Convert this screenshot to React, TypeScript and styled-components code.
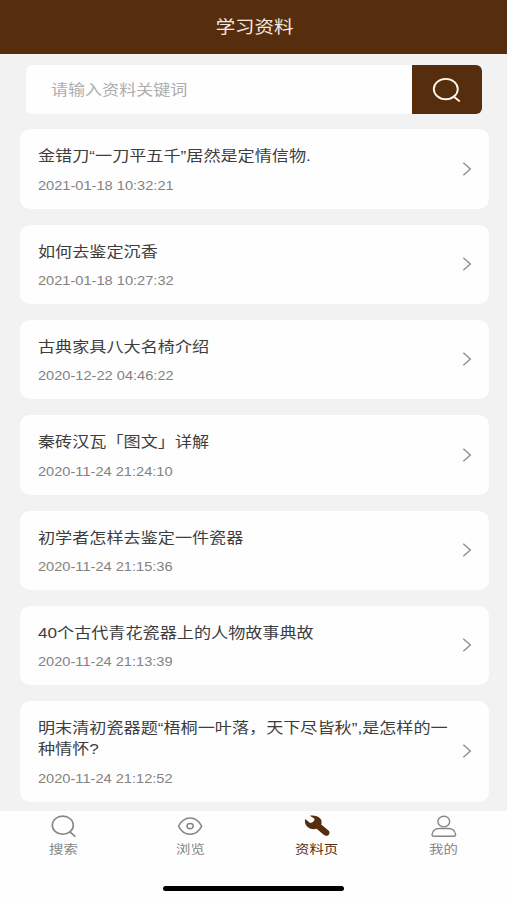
import React from "react";
import styled, { createGlobalStyle } from "styled-components";

const brown = "#572e0d";

const GlobalStyle = createGlobalStyle`
  * { box-sizing: border-box; }
  body {
    margin: 0;
    background: #f2f2f2;
    font-family: "Liberation Sans", "Noto Sans CJK SC", sans-serif;
  }
`;

const Page = styled.div`
  display: flex;
  flex-direction: column;
  width: 507px;
  height: 900px;
  overflow: hidden;
  background: #f2f2f2;
`;

const Wide = styled.span<{ $origin?: string }>`
  display: inline-block;
  white-space: nowrap;
  transform: scaleX(1.16);
  transform-origin: ${(p) => p.$origin ?? "left"} center;
`;

const Header = styled.header`
  flex: none;
  height: 54px;
  display: flex;
  justify-content: center;
  padding-left: 2px;
  background: ${brown};
  color: #f3e9e2;
  font-size: 16.8px;
  line-height: 55px;
`;

const SearchBar = styled.div`
  flex: none;
  display: flex;
  height: 49px;
  margin: 11px 25px 0 26px;
  border-radius: 6px;
  overflow: hidden;
  background: #fefefe;
`;

const SearchField = styled.div`
  flex: 1;
  padding-left: 25px;
  color: #adadad;
  font-size: 14.7px;
  line-height: 51px;
`;

const SearchButton = styled.button`
  display: flex;
  align-items: center;
  justify-content: center;
  width: 70px;
  padding: 0;
  border: 0;
  background: ${brown};
  color: #fff8f0;
`;

const List = styled.main`
  flex: 1;
  min-height: 0;
  display: flex;
  flex-direction: column;
  gap: 15.9px;
  padding: 15.4px 18.3px 0 19.7px;
`;

const Card = styled.article`
  flex: none;
  display: flex;
  align-items: center;
  justify-content: space-between;
  padding: 17.1px 17px 14px 18px;
  border-radius: 10px;
  background: #fefefe;
  color: #929292;

  > svg {
    margin-top: -3.6px;
  }
`;

const CardTitle = styled.h2`
  margin: 0 0 10px;
  color: #3d3d3d;
  font-size: 14.75px;
  font-weight: 400;
  line-height: 21.3px;
`;

const CardDate = styled.time`
  display: block;
  color: #828282;
  font-size: 12.6px;
  line-height: 17px;
`;

const TabBar = styled.nav`
  flex: none;
  display: grid;
  grid-template-columns: repeat(4, 1fr);
  height: 52px;
  background: #fefefe;
`;

const Tab = styled.div<{ $active?: boolean }>`
  display: flex;
  flex-direction: column;
  align-items: center;
  padding-top: 3px;
  color: ${(p) => (p.$active ? brown : "#858585")};
  font-size: 12.4px;
  line-height: 20px;

  svg {
    display: block;
    margin-bottom: 2px;
  }
`;

const HomeArea = styled.footer`
  flex: none;
  display: flex;
  justify-content: center;
  height: 37px;
  padding-top: 23px;
  background: #fefefe;
`;

const HomeIndicator = styled.div`
  width: 181px;
  height: 5px;
  border-radius: 3px;
  background: #000;
`;

const items = [
  { lines: ["金错刀“一刀平五千”居然是定情信物."], date: "2021-01-18 10:32:21" },
  { lines: ["如何去鉴定沉香"], date: "2021-01-18 10:27:32" },
  { lines: ["古典家具八大名椅介绍"], date: "2020-12-22 04:46:22" },
  { lines: ["秦砖汉瓦「图文」详解"], date: "2020-11-24 21:24:10" },
  { lines: ["初学者怎样去鉴定一件瓷器"], date: "2020-11-24 21:15:36" },
  { lines: ["40个古代青花瓷器上的人物故事典故"], date: "2020-11-24 21:13:39" },
  {
    lines: ["明末清初瓷器题“梧桐一叶落，天下尽皆秋”,是怎样的一", "种情怀?"],
    date: "2020-11-24 21:12:52",
  },
];

const Chevron = () => (
  <svg width="10" height="16" viewBox="0 0 10 16" fill="none" stroke="currentColor" strokeWidth="1.5">
    <path d="M1.3 1.8 8.3 8l-7 6.2" />
  </svg>
);

const SearchButtonIcon = () => (
  <svg width="30" height="26" viewBox="0 0 30 26" fill="none" stroke="currentColor" strokeWidth="1.9" strokeLinecap="round">
    <ellipse cx="13.8" cy="12.1" rx="12" ry="10.2" />
    <path d="m21.7 19.5 5.5 4.4" />
  </svg>
);

const SearchIcon = () => (
  <svg width="28" height="24" viewBox="0 0 28 24" fill="none" stroke="currentColor" strokeWidth="1.6" strokeLinecap="round">
    <ellipse cx="13.8" cy="11.2" rx="10.5" ry="9.1" />
    <path d="m20.9 17.8 4.9 4.3" />
  </svg>
);

const EyeIcon = () => (
  <svg width="28" height="24" viewBox="0 0 28 24" fill="none" stroke="currentColor" strokeWidth="1.5">
    <path
      d="M2.5 12.1C5.2 6.8 9.3 3.9 14.1 3.9s8.900 2.900 11.600 8.200c-2.700 5.300-6.800 8.200-11.600 8.200S5.200 17.400 2.500 12.100Z"
      strokeLinejoin="round"
    />
    <ellipse cx="14.1" cy="12.1" rx="3.1" ry="2.7" />
  </svg>
);

const WrenchIcon = () => (
  <svg width="28" height="24" viewBox="0 0 28 24" fill="currentColor">
    <path d="M6.800 1.700C10.500.9 15 1.800 17.300 4.400c1.500 1.800 1.700 4.200.9 6.200l7.300 6c1.400 1.200 1.400 3.100.1 4.300-1.400 1.200-3.500 1.100-4.900-.1l-7.100-6.100c-2.800.9-6.400.5-8.700-1.400C2.200 11 1.300 7.900 2.200 4.900l4 3.300c.9.700 2.300.7 3.200 0l1.500-1.300c.8-.7.8-1.900 0-2.600Z" />
  </svg>
);

const UserIcon = () => (
  <svg width="28" height="24" viewBox="0 0 28 24" fill="none" stroke="currentColor" strokeWidth="1.4">
    <ellipse cx="13.8" cy="7.6" rx="5.9" ry="5.3" />
    <path d="M9.300 14.500h9c4.100 0 6.700 2.300 7.300 6 .1 1-.6 1.700-1.700 1.700H3.700c-1.100 0-1.800-.7-1.700-1.700.6-3.700 3.200-6 7.300-6Z" />
  </svg>
);

const tabs = [
  { label: "搜索", Icon: SearchIcon },
  { label: "浏览", Icon: EyeIcon },
  { label: "资料页", Icon: WrenchIcon, active: true },
  { label: "我的", Icon: UserIcon },
];

export default function App() {
  return (
    <Page>
      <GlobalStyle />
      <Header>
        <Wide $origin="center">学习资料</Wide>
      </Header>
      <SearchBar>
        <SearchField>
          <Wide>请输入资料关键词</Wide>
        </SearchField>
        <SearchButton aria-label="搜索">
          <SearchButtonIcon />
        </SearchButton>
      </SearchBar>
      <List>
        {items.map((item) => (
          <Card key={item.date}>
            <div>
              <CardTitle>
                <Wide>
                  {item.lines.map((line, i) => (
                    <React.Fragment key={line}>
                      {i > 0 && <br />}
                      {line}
                    </React.Fragment>
                  ))}
                </Wide>
              </CardTitle>
              <CardDate>
                <Wide>{item.date}</Wide>
              </CardDate>
            </div>
            <Chevron />
          </Card>
        ))}
      </List>
      <TabBar>
        {tabs.map(({ label, Icon, active }) => (
          <Tab key={label} $active={active}>
            <Icon />
            <Wide $origin="center">{label}</Wide>
          </Tab>
        ))}
      </TabBar>
      <HomeArea>
        <HomeIndicator />
      </HomeArea>
    </Page>
  );
}
